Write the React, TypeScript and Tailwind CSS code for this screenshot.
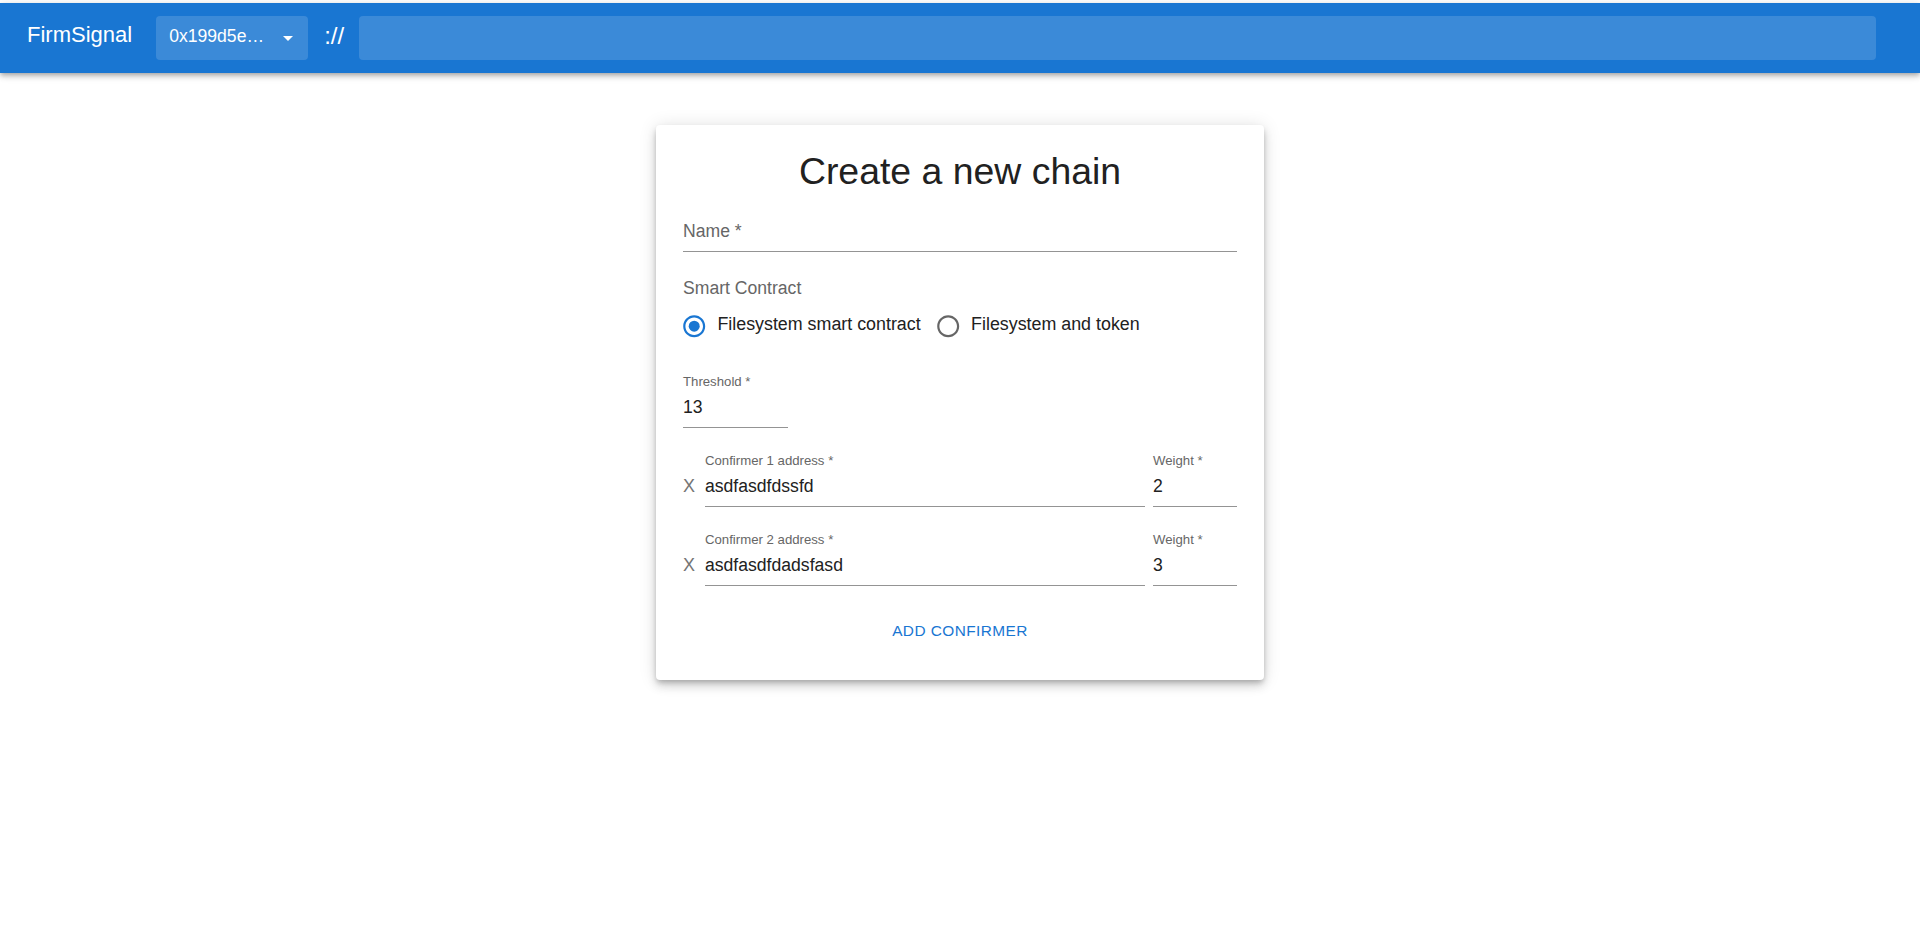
import { useState } from "react";

// Standard (underlined) text field, MUI-like, drawn at 110%
function Field({
  label,
  value,
  className = "",
}: {
  label: string;
  value?: string;
  className?: string;
}) {
  const empty = value === undefined || value === "";
  return (
    <div className={`flex flex-col ${className}`}>
      <div className="h-[18px] text-[13.2px] leading-[20px] text-[#666666] whitespace-nowrap">
        {empty ? "" : label}
      </div>
      <div className="h-[38px] pt-[4px] pb-[7px] border-b border-[#949494]">
        <div
          className={`text-[17.6px] leading-[26px] whitespace-nowrap ${
            empty ? "text-[#666666]" : "text-[#212121]"
          }`}
        >
          {empty ? label : value}
        </div>
      </div>
    </div>
  );
}

function Radio({ checked, label }: { checked: boolean; label: string }) {
  return (
    <label className="flex items-center h-[46px] cursor-pointer">
      <svg
        viewBox="0 0 24 24"
        className="w-[26.4px] h-[26.4px] ml-[-2px]"
        fill={checked ? "#1976d2" : "#666666"}
      >
        <path d="M12 2C6.48 2 2 6.48 2 12s4.48 10 10 10 10-4.48 10-10S17.52 2 12 2zm0 18c-4.42 0-8-3.58-8-8s3.58-8 8-8 8 3.58 8 8-3.58 8-8 8z" />
        {checked && <circle cx="12" cy="12" r="5" />}
      </svg>
      <span className="ml-[10px] text-[17.85px] leading-[26px] pb-[5px] text-[#212121] whitespace-nowrap">
        {label}
      </span>
    </label>
  );
}

export default function App() {
  const [contract, setContract] = useState("fs");
  const confirmers = [
    { address: "asdfasdfdssfd", weight: "2" },
    { address: "asdfasdfdadsfasd", weight: "3" },
  ];

  return (
    <div className="min-h-screen bg-white font-['Liberation_Sans',Arial,sans-serif]">
      {/* top bar */}
      <header className="mt-[3px] bg-[#1976d2] text-white shadow-[0px_2px_4px_-1px_rgba(0,0,0,0.2),0px_4px_5px_0px_rgba(0,0,0,0.14),0px_1px_10px_0px_rgba(0,0,0,0.12)]">
        <div className="flex items-center h-[70px] pl-[27px] pr-[44px]">
          <div className="text-[22px] leading-[32px] pb-[6px] mr-[24px]">FirmSignal</div>
          <div className="relative flex items-center w-[152px] h-[44px] rounded-[4px] bg-white/15 pl-[13px]">
            <span className="text-[17.6px] leading-[24px] pb-[4px]">0x199d5e…</span>
            <svg viewBox="0 0 24 24" className="absolute right-[8px] top-[10px] w-[24px] h-[24px]" fill="white">
              <path d="M7 10l5 5 5-5z" />
            </svg>
          </div>
          <div className="ml-[16px] mr-[15px] text-[24px] leading-[30px] pb-[4px]">://</div>
          <div className="flex-1 h-[44px] rounded-[4px] bg-white/15" />
        </div>
      </header>

      {/* form card */}
      <main className="flex justify-center pt-[52px]">
        <div className="w-[608px] bg-white rounded-[4px] px-[27px] pt-[23px] pb-[30px] shadow-[0px_3px_5px_-1px_rgba(0,0,0,0.2),0px_6px_10px_0px_rgba(0,0,0,0.14),0px_1px_18px_0px_rgba(0,0,0,0.12)]">
          <h1 className="h-[46px] text-center text-[37.4px] leading-[46px] text-[#212121]">
            Create a new chain
          </h1>

          <Field label="Name *" className="mt-[2px]" />

          <div className="mt-[24px] text-[17.6px] leading-[24px] text-[#666666]">Smart Contract</div>
          <div className="mt-[3px] flex items-center gap-[16px]" onClick={() => setContract(contract)}>
            <Radio checked={contract === "fs"} label="Filesystem smart contract" />
            <Radio checked={contract === "token"} label="Filesystem and token" />
          </div>

          <Field label="Threshold *" value="13" className="mt-[23px] w-[105px]" />

          {confirmers.map((c, i) => (
            <div key={i} className="mt-[23px] flex items-start">
              <div className="w-[22px] pt-[22px] text-[18px] leading-[26px] text-[#757575]">X</div>
              <Field label={`Confirmer ${i + 1} address *`} value={c.address} className="flex-1" />
              <Field label="Weight *" value={c.weight} className="ml-[8px] w-[84px]" />
            </div>
          ))}

          <div className="mt-[24px] flex justify-center">
            <button className="h-[40px] px-[9px] text-[15.4px] leading-[27px] tracking-[0.44px] text-[#1976d2] uppercase">
              Add confirmer
            </button>
          </div>
        </div>
      </main>
    </div>
  );
}
